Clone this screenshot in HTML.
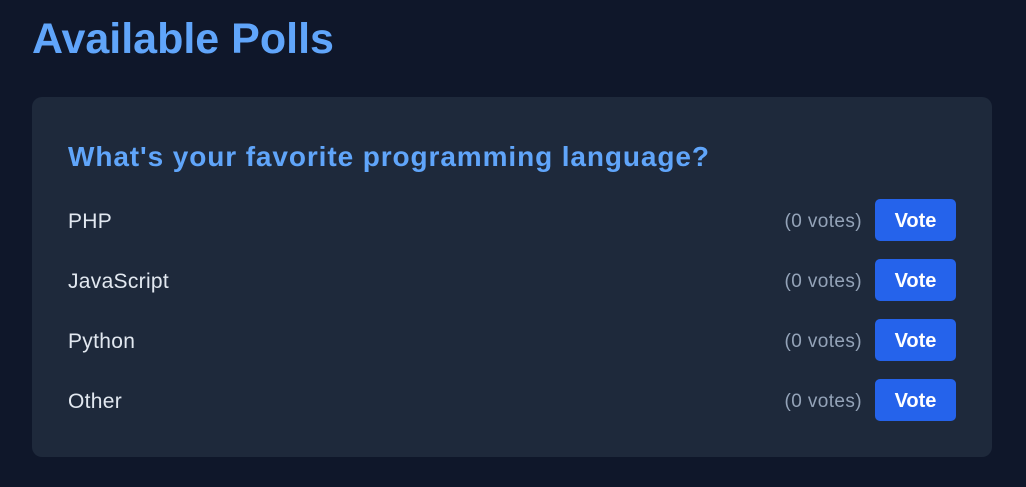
<!DOCTYPE html>
<html><head><style>
html,body{margin:0;padding:0;background:#0f172a;width:1026px;height:487px;overflow:hidden;font-family:"Liberation Sans","DejaVu Sans",sans-serif;}
h1{position:absolute;left:32px;top:13px;margin:0;font-size:43px;line-height:52px;color:#60a5fa;font-weight:bold;letter-spacing:0px;}
.card{position:absolute;left:32px;top:97px;width:960px;height:360px;background:#1e293b;border-radius:10px;}
h2{position:absolute;left:36px;top:42px;margin:0;font-size:28px;line-height:36px;color:#60a5fa;font-weight:bold;letter-spacing:0.9px;}
.row{position:absolute;left:36px;width:888px;height:42px;}
.opt{position:absolute;left:0;top:2px;line-height:42px;font-size:21px;color:#e2e8f0;letter-spacing:0.3px;}
.votes{position:absolute;right:94px;top:2px;line-height:42px;font-size:19px;color:#94a3b8;letter-spacing:0.4px;}
.btn{position:absolute;right:0;top:0;width:81px;height:42px;background:#2563eb;border-radius:5px;color:#fff;font-weight:bold;font-size:20px;line-height:45px;text-align:center;}
</style></head><body>
<h1>Available Polls</h1>
<div class="card">
<h2>What's your favorite programming language?</h2>
<div class="row" style="top:102px"><span class="opt">PHP</span><span class="votes">(0 votes)</span><span class="btn">Vote</span></div>
<div class="row" style="top:162px"><span class="opt">JavaScript</span><span class="votes">(0 votes)</span><span class="btn">Vote</span></div>
<div class="row" style="top:222px"><span class="opt">Python</span><span class="votes">(0 votes)</span><span class="btn">Vote</span></div>
<div class="row" style="top:282px"><span class="opt">Other</span><span class="votes">(0 votes)</span><span class="btn">Vote</span></div>
</div>
</body></html>
